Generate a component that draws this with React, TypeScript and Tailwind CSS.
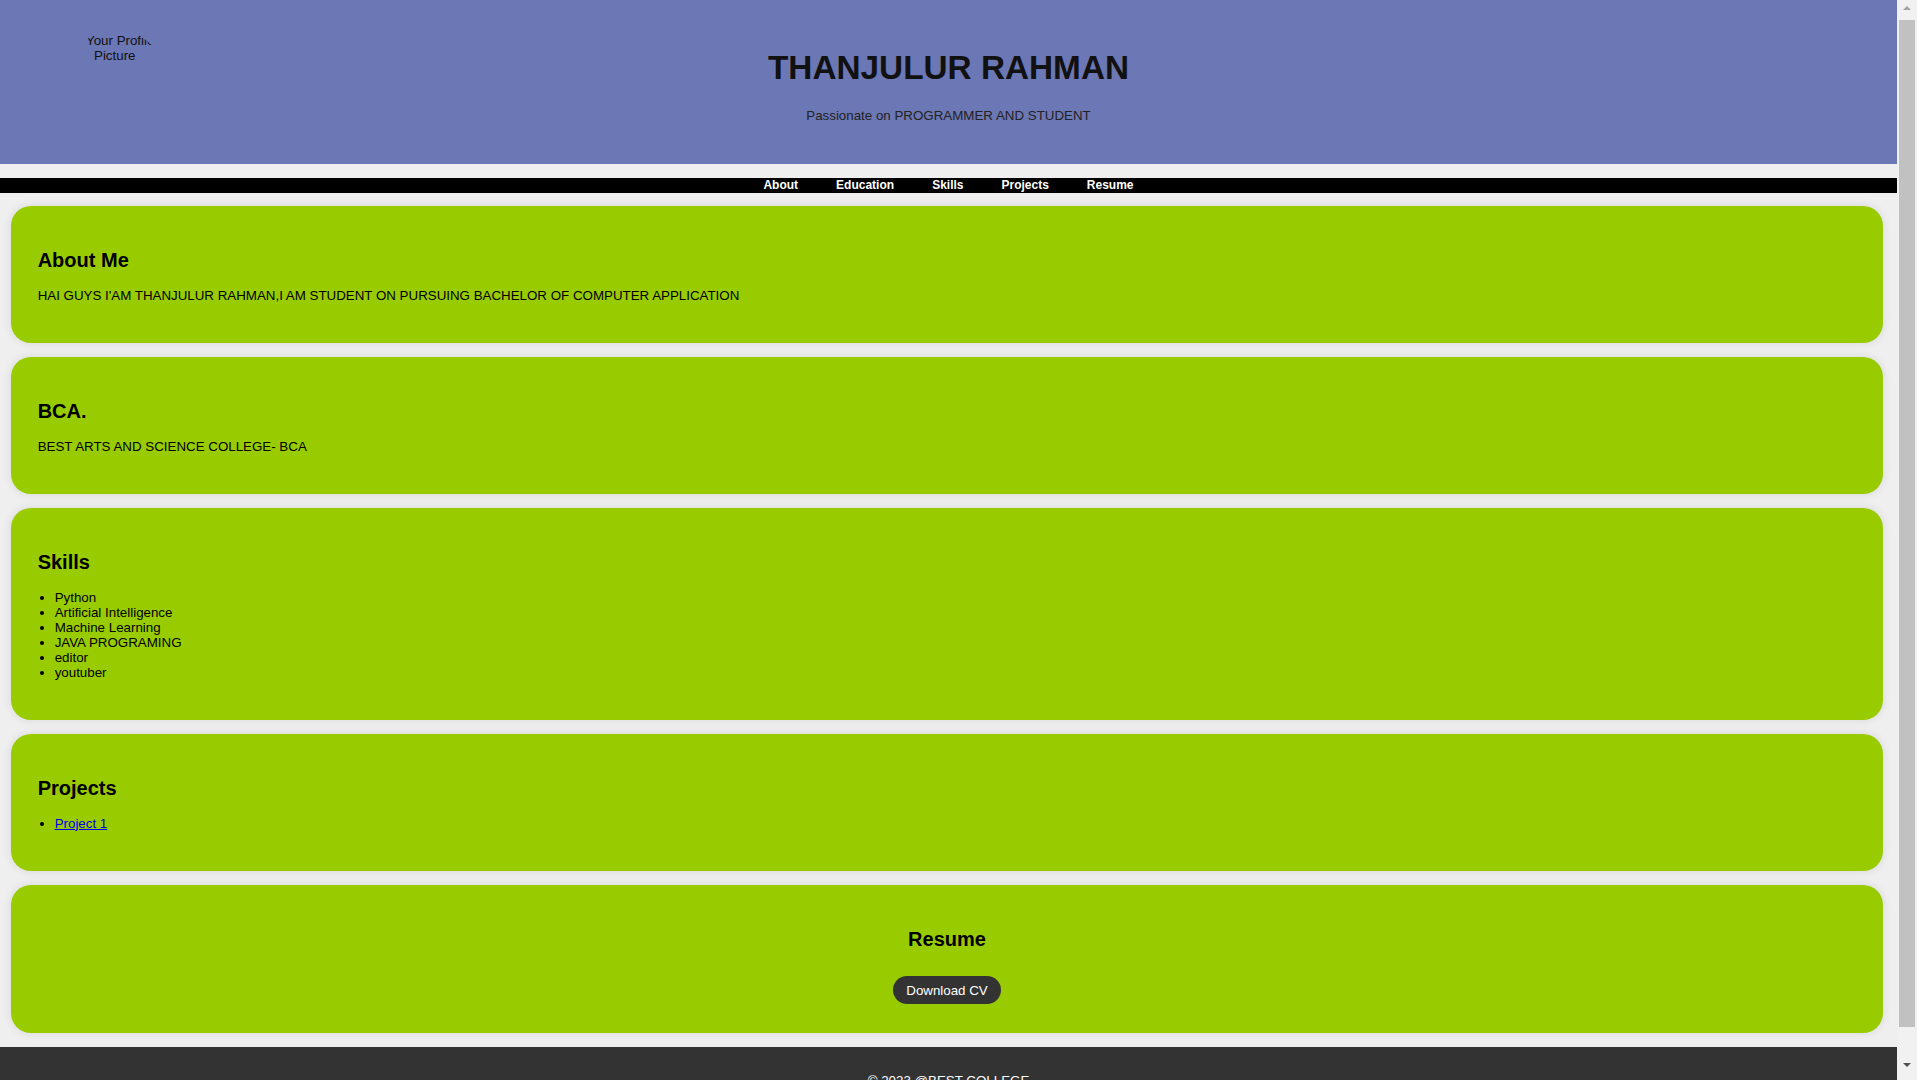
const skills = [
  "Python",
  "Artificial Intelligence",
  "Machine Learning",
  "JAVA PROGRAMING",
  "editor",
  "youtuber",
];

const Card = ({ children, center }: { children: React.ReactNode; center?: boolean }) => {
  return (
    <section
      className={`ml-[11px] mr-[14px] rounded-[20px] bg-[#99cc00] px-[26.67px] pt-[43.3px] shadow-[0_0_10px_rgba(0,0,0,0.1)] ${
        center ? "flex flex-col items-center pb-[29px]" : "pb-[40px]"
      }`}
    >
      {children}
    </section>
  );
};

const Title = ({ children }: { children: React.ReactNode }) => (
  <h2 className="text-[20px] font-bold leading-[22px] text-black">{children}</h2>
);

// the page's vertical scrollbar, as in the screenshot
const ScrollBar = () => (
  <aside className="sticky top-0 flex h-screen w-[20px] shrink-0 flex-col items-center self-start bg-[#f1f1f1]">
    <div className="mt-[6px] h-0 w-0 border-x-[4px] border-b-[4px] border-x-transparent border-b-[#a3a3a3]" />
    <div className="mt-[10px] h-[1007px] w-[16px] bg-[#c1c1c1]" />
    <div className="mt-[36px] h-0 w-0 border-x-[4px] border-t-[4px] border-x-transparent border-t-[#505050]" />
  </aside>
);

export default function App() {
  return (
    <div className="flex min-h-screen bg-[#efefef] font-['Liberation_Sans',Arial,sans-serif] text-[13.33px] leading-[15px] text-black">
      <div className="min-w-0 flex-1">
        {/* header */}
        <header className="grid h-[164px] grid-cols-[1fr_auto_1fr] bg-[#6c77b5]">
          <div>
            <div className="ml-[66px] mt-[30px] h-[100px] w-[100px] overflow-hidden rounded-full pt-[3px] text-[#111]">
              <span className="block whitespace-nowrap pl-[20px]">Your Profile</span>
              <span className="block whitespace-nowrap pl-[28px]">Picture</span>
            </div>
          </div>
          <div className="flex flex-col items-center">
            <h1 className="mt-[49px] text-[33.33px] font-bold leading-[37px] text-[#111]">
              THANJULUR RAHMAN
            </h1>
            <p className="mt-[22.3px] text-[#222]">Passionate on PROGRAMMER AND STUDENT</p>
          </div>
          <div />
        </header>

        {/* nav */}
        <nav className="mt-[14px] flex h-[15px] items-center justify-center gap-[38px] bg-black">
          {["About", "Education", "Skills", "Projects", "Resume"].map((item) => (
            <a key={item} href={`#${item.toLowerCase()}`} className="text-[12px] font-bold leading-[15px] text-white">
              {item}
            </a>
          ))}
        </nav>

        <main className="mt-[13px] mb-[14px] flex flex-col gap-[14px]">
          <Card>
            <Title>About Me</Title>
            <p className="mt-[16.6px]">
              HAI GUYS I'AM THANJULUR RAHMAN,I AM STUDENT ON PURSUING BACHELOR OF COMPUTER APPLICATION
            </p>
          </Card>

          <Card>
            <Title>BCA.</Title>
            <p className="mt-[16.6px]">BEST ARTS AND SCIENCE COLLEGE- BCA</p>
          </Card>

          <Card>
            <Title>Skills</Title>
            <ul className="mt-[16.6px] list-disc pl-[17px]">
              {skills.map((s) => (
                <li key={s}>{s}</li>
              ))}
            </ul>
          </Card>

          <Card>
            <Title>Projects</Title>
            <ul className="mt-[16.6px] list-disc pl-[17px]">
              <li>
                <a href="#" className="text-[#0000ee] underline">
                  Project 1
                </a>
              </li>
            </ul>
          </Card>

          <Card center>
            <Title>Resume</Title>
            <a
              href="#"
              className="mt-[26.5px] rounded-full bg-[#333] px-[13.5px] py-[6.2px] text-white"
            >
              Download CV
            </a>
          </Card>
        </main>

        <footer className="bg-[#333] pt-[26px] pb-[26px] text-center text-white">
          <p>© 2023 @BEST COLLEGE</p>
        </footer>
      </div>
      <ScrollBar />
    </div>
  );
}
